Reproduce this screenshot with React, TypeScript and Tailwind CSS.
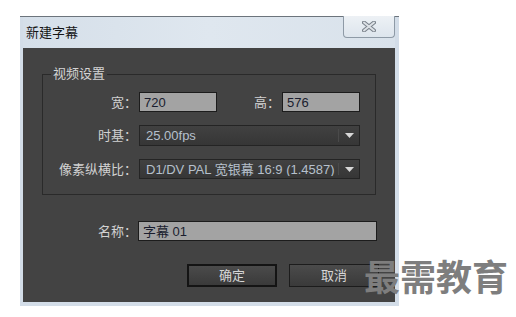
import React from "react";

const FONT = { fontFamily: '"Liberation Sans", "Noto Sans CJK SC", sans-serif' };

function TextBox({ value, w }: { value: string; w: string }) {
  return (
    <div className={`${w} h-[20px] border border-[#1c1c1c] bg-[#a3a3a3] flex items-center pl-[4px] text-[13px] leading-none text-[#1a1d2e]`}>
      {value}
    </div>
  );
}

function Dropdown({ value, h }: { value: string; h: string }) {
  return (
    <div className={`w-[221px] ${h} border border-[#242424] bg-gradient-to-b from-[#414141] to-[#363636] flex items-center text-[13px] leading-none text-[#b6c0cc]`}>
      <div className="flex-1 pl-[6px] whitespace-nowrap overflow-hidden">{value}</div>
      <div className="w-px self-stretch my-[3px] bg-[#262626] border-r border-[#4a4a4a]" />
      <div className="w-[20px] flex items-center justify-center">
        <svg width="9" height="5" viewBox="0 0 9 5">
          <path d="M0 0 H9 L4.5 5 Z" fill="#d8d8d8" />
        </svg>
      </div>
    </div>
  );
}

function Label({ text, w }: { text: string; w: string }) {
  return <div className={`${w} text-right text-[13px] leading-none text-[#d2d2d2]`}>{text}</div>;
}

export default function App() {
  return (
    <div className="w-[516px] h-[317px] bg-white relative overflow-hidden" style={FONT}>
      <div className="ml-[20px] mt-[16px] w-[379px] h-[290px] flex flex-col border-t border-[#6c747c] bg-[#d3dde8] pl-[3px] pr-[4px] pb-[4px]">
        {/* title bar */}
        <div className="h-[31px] flex items-start bg-gradient-to-r from-[#d5dfe9] via-[#dfe7ef] to-[#d9e2eb]">
          <div className="self-center pl-[3px] text-[13px] leading-none text-[#151515]">新建字幕</div>
          <div className="ml-auto -mt-px w-[52px] h-[22px] rounded-b-[4px] border border-t-0 border-[#8e9aa6] bg-gradient-to-b from-[#edf1f5] to-[#dde5ed] flex items-center justify-center">
            <svg width="14" height="11" viewBox="0 0 14 11">
              <path d="M2 1.5 L12 9.5 M12 1.5 L2 9.5" stroke="#7a828b" strokeWidth="4" strokeLinecap="round" />
              <path d="M2 1.5 L12 9.5 M12 1.5 L2 9.5" stroke="#dde2e7" strokeWidth="2" strokeLinecap="round" />
            </svg>
          </div>
        </div>
        {/* dark panel */}
        <div className="h-[254px] bg-[#434343] pt-[26px] pl-[19px] flex flex-col">
          <div className="w-[334px] h-[121px] border border-[#2a2a2a] relative flex flex-col pt-[17px]">
            <div className="absolute left-[8px] top-[-9px] px-[2px] bg-[#434343] text-[13px] leading-[16px] text-[#d4d4d4]">视频设置</div>
            <div className="flex items-center h-[20px]">
              <Label text="宽：" w="w-[94px]" />
              <div className="ml-[2px]"><TextBox value="720" w="w-[78px]" /></div>
              <Label text="高：" w="w-[63px]" />
              <div className="ml-[2px]"><TextBox value="576" w="w-[78px]" /></div>
            </div>
            <div className="flex items-center mt-[13px]">
              <Label text="时基：" w="w-[94px]" />
              <div className="ml-[2px]"><Dropdown value="25.00fps" h="h-[21px]" /></div>
            </div>
            <div className="flex items-center mt-[13px]">
              <Label text="像素纵横比：" w="w-[94px]" />
              <div className="ml-[2px]"><Dropdown value="D1/DV PAL 宽银幕 16:9 (1.4587)" h="h-[20px]" /></div>
            </div>
          </div>
          <div className="flex items-center mt-[26px]">
            <Label text="名称：" w="w-[95px]" />
            <div className="ml-[1px]"><TextBox value="字幕 01" w="w-[239px]" /></div>
          </div>
          <div className="flex mt-[23px] ml-[145px] gap-[12px]">
            <div className="w-[90px] h-[23px] border-2 border-[#141414] bg-gradient-to-b from-[#4b4b4b] to-[#3a3a3a] flex items-center justify-center text-[13px] leading-none text-[#d6d6d6]">确定</div>
            <div className="w-[90px] h-[23px] border border-[#1c1c1c] bg-gradient-to-b from-[#4b4b4b] to-[#3a3a3a] flex items-center justify-center text-[13px] leading-none text-[#d6d6d6]">取消</div>
          </div>
        </div>
      </div>
      <div className="absolute left-[364px] top-[257px] text-[36px] leading-none font-bold text-[#7e7e7e] whitespace-nowrap" style={{ fontFamily: '"Noto Sans CJK SC", sans-serif' }}>
        最需教育
      </div>
    </div>
  );
}
